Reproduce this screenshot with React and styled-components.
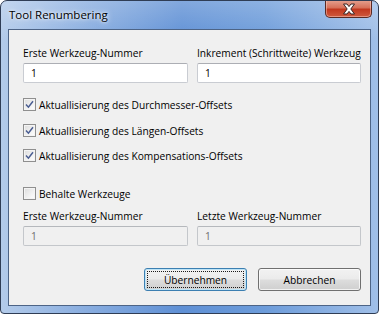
import React from 'react'
import styled, { createGlobalStyle } from 'styled-components'

const GlobalStyle = createGlobalStyle`
  html, body {
    margin: 0;
    padding: 0;
    background: #ffffff;
  }
  * {
    box-sizing: border-box;
  }
`;

function CloseGlyph() {
  return (
    <svg width="14" height="12" viewBox="0 0 14 12">
      <path
        d="M1.5 1 L5 1 L7 3.6 L9 1 L12.5 1 L8.8 6 L12.5 11 L9 11 L7 8.4 L5 11 L1.5 11 L5.2 6 Z"
        fill="#ffffff"
        stroke="#3a2424"
        strokeWidth="1"
        strokeLinejoin="round"
      />
    </svg>
  )
}

function CheckMark() {
  return (
    <svg width="9" height="9" viewBox="0 0 9 9">
      <path d="M1 4.6 L3.4 7.2 L8 1.2" fill="none" stroke="#4a5d92" strokeWidth="1.5" />
    </svg>
  )
}

function Check({ checked, children, top }) {
  return (
    <CheckRow $top={top}>
      <Box>{checked && <CheckMark />}</Box>
      <span>{children}</span>
    </CheckRow>
  )
}

function App() {
  return (
    <>
      <GlobalStyle />
      <Window>
        <TitleBar>
          <Title>Tool Renumbering</Title>
          <CloseButton>
            <CloseGlyph />
          </CloseButton>
        </TitleBar>
        <Client>
          <FieldGrid>
            <Field>
              <Label>Erste Werkzeug-Nummer</Label>
              <Input>1</Input>
            </Field>
            <Field>
              <Label>Inkrement (Schrittweite) Werkzeug-Nummer</Label>
              <Input>1</Input>
            </Field>
          </FieldGrid>

          <Check checked top={13}>Aktuallisierung des Durchmesser-Offsets</Check>
          <Check checked top={9}>Aktuallisierung des Längen-Offsets</Check>
          <Check checked top={8}>Aktuallisierung des Kompensations-Offsets</Check>
          <Check top={21}>Behalte Werkzeuge</Check>

          <FieldGrid $top={6}>
            <Field>
              <Label>Erste Werkzeug-Nummer</Label>
              <Input $disabled>1</Input>
            </Field>
            <Field>
              <Label>Letzte Werkzeug-Nummer</Label>
              <Input $disabled>1</Input>
            </Field>
          </FieldGrid>

          <ButtonRow>
            <Button $default>
              <FocusRect>Übernehmen</FocusRect>
            </Button>
            <Button>Abbrechen</Button>
          </ButtonRow>
        </Client>
      </Window>
    </>
  )
}

export default App

const Window = styled.div`
  width: 379px;
  height: 314px;
  display: flex;
  flex-direction: column;
  border: 1px solid #2f3d55;
  border-radius: 7px 7px 4px 4px;
  overflow: hidden;
  background:
    linear-gradient(180deg, rgba(255,255,255,0.22) 0px, rgba(255,255,255,0) 40px),
    linear-gradient(90deg, #b3cbea 0%, #8aaee0 22%, #5f90d5 48%, #6d9cda 70%, #a0bfe8 100%);
  font-family: "Open Sans", "Liberation Sans", sans-serif;
  font-size: 10.2px;
  color: #000;
`;

const TitleBar = styled.div`
  height: 28px;
  display: flex;
  justify-content: space-between;
  align-items: flex-start;
  padding-left: 8px;
  padding-right: 6px;
`;

const Title = styled.div`
  margin-top: 6px;
  font-size: 11.5px;
  line-height: 16px;
  color: #000;
  text-shadow: 0 0 6px rgba(255,255,255,0.9), 0 0 3px rgba(255,255,255,0.9);
`;

const CloseButton = styled.div`
  width: 47px;
  height: 18px;
  margin-top: -1px;
  display: flex;
  align-items: center;
  justify-content: center;
  border: 1px solid #5a2a24;
  border-top: none;
  border-radius: 0 0 5px 5px;
  background: linear-gradient(180deg, #e6a392 0%, #d7715a 45%, #c2381f 55%, #cf5a3e 100%);
  box-shadow: inset 0 0 0 1px rgba(255,220,210,0.45);
`;

const Client = styled.div`
  flex: 1;
  margin: 0 7px 7px 7px;
  border: 1px solid #4d6486;
  background: #f0f0f0;
  padding: 15px 9px 0 14px;
  display: flex;
  flex-direction: column;
`;

const FieldGrid = styled.div`
  display: grid;
  grid-template-columns: 165px 164px;
  column-gap: 9px;
  margin-top: ${p => p.$top || 0}px;
`;

const Field = styled.div`
  display: flex;
  flex-direction: column;
  min-width: 0;
`;

const Label = styled.div`
  height: 16px;
  line-height: 16px;
  white-space: nowrap;
  overflow: hidden;
  margin-bottom: 2px;
`;

const Input = styled.div`
  height: 20px;
  line-height: 18px;
  padding-left: 7px;
  border: 1px solid ${p => (p.$disabled ? '#c4c7cb' : '#c9ccd2')};
  border-top-color: ${p => (p.$disabled ? '#b5b8bc' : '#acaeb4')};
  border-radius: 2px;
  background: ${p => (p.$disabled ? '#f0f0f0' : '#ffffff')};
  color: ${p => (p.$disabled ? '#6d6d6d' : '#000')};
`;

const CheckRow = styled.div`
  height: 17px;
  display: flex;
  align-items: center;
  gap: 3px;
  margin-top: ${p => p.$top}px;
  white-space: nowrap;
`;

const Box = styled.div`
  width: 13px;
  height: 13px;
  flex: none;
  display: flex;
  align-items: center;
  justify-content: center;
  border: 1px solid #8f8f8f;
  background: linear-gradient(135deg, #dcdcdc 0%, #f2f2f2 60%, #ffffff 100%);
  box-shadow: inset 0 0 0 1px #f4f4f4;
`;

const ButtonRow = styled.div`
  display: flex;
  justify-content: flex-end;
  gap: 11px;
  margin-top: 22px;
`;

const Button = styled.div`
  width: 103px;
  height: 23px;
  display: flex;
  align-items: center;
  justify-content: center;
  padding: 2px;
  border: 1px solid ${p => (p.$default ? '#3c7fb1' : '#707070')};
  border-radius: 3px;
  background: linear-gradient(180deg, #f2f2f2 0%, #ebebeb 48%, #dddddd 52%, #cfcfcf 100%);
  box-shadow: inset 0 0 0 1px ${p => (p.$default ? '#bde4f7' : 'rgba(255,255,255,0.7)')};
`;

const FocusRect = styled.div`
  width: 100%;
  height: 100%;
  display: flex;
  align-items: center;
  justify-content: center;
  border: 1px dotted #1a1a1a;
`;
